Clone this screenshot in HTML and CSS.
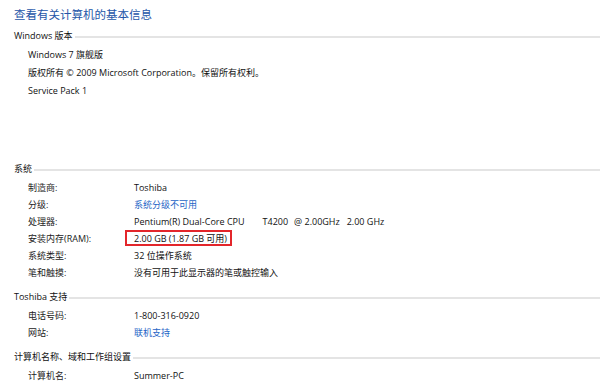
FILE: index.html
```html
<!DOCTYPE html>
<html lang="zh-CN">
<head>
  <meta charset="UTF-8" />
  <title>系统</title>
  <link rel="stylesheet" href="styles.css">
</head>
<body>

  <h1 class="title">查看有关计算机的基本信息</h1>

  <div class="section first">
    <div class="head"><span>Windows 版本</span><i></i></div>
    <div class="row"><span class="val">Windows 7 旗舰版</span></div>
    <div class="row"><span class="val">版权所有 © 2009 Microsoft Corporation。保留所有权利。</span></div>
    <div class="row"><span class="val">Service Pack 1</span></div>
  </div>

  <div class="section gap">
    <div class="head"><span>系统</span><i></i></div>
    <div class="row"><span class="label">制造商:</span><span>Toshiba</span></div>
    <div class="row"><span class="label">分级:</span><a href="#">系统分级不可用</a></div>
    <div class="row"><span class="label">处理器:</span><span>Pentium(R) Dual-Core CPU</span><span class="sp1">T4200</span><span class="sp2">@ 2.00GHz</span><span class="sp3">2.00 GHz</span></div>
    <div class="row"><span class="label">安装内存(RAM):</span><span class="hl">2.00 GB (1.87 GB 可用)</span></div>
    <div class="row"><span class="label">系统类型:</span><span>32 位操作系统</span></div>
    <div class="row"><span class="label">笔和触摸:</span><span>没有可用于此显示器的笔或触控输入</span></div>
  </div>

  <div class="section">
    <div class="head"><span>Toshiba 支持</span><i></i></div>
    <div class="row"><span class="label">电话号码:</span><span>1-800-316-0920</span></div>
    <div class="row"><span class="label">网站:</span><a href="#">联机支持</a></div>
  </div>

  <div class="section">
    <div class="head"><span>计算机名称、域和工作组设置</span><i></i></div>
    <div class="row"><span class="label">计算机名:</span><span>Summer-PC</span></div>
  </div>

</body>
</html>
```

FILE: styles.css
```css
* {
  margin: 0;
  padding: 0;
  box-sizing: border-box;
}
html, body {
  height: 100%;
  overflow: hidden;
  background: #fff;
}
body {
  padding: 0 0 0 14px;
  font-family: "Open Sans", "Noto Sans CJK SC", sans-serif;
  font-size: 9px;
  color: #111;
}
.title {
  height: 28px;
  line-height: 28px;
  font-size: 11.5px;
  font-weight: normal;
  color: #2456a8;
  font-family: "Noto Sans CJK SC", sans-serif;
}
.section {
  margin-top: 8px;
}
.section.first {
  margin-top: 0;
}
.section.gap {
  margin-top: 62px;
}
.head {
  display: flex;
  align-items: center;
  height: 14px;
  margin-bottom: 4px;
}
.head span {
  white-space: nowrap;
}
.head i {
  flex: 1;
  height: 2px;
  margin: 3px 0 0 2px;
  background: #e4e4e4;
}
.row {
  display: flex;
  align-items: center;
  height: 17px;
  padding-left: 14px;
  white-space: nowrap;
}
.first .head {
  margin-bottom: 3px;
}
.first .row {
  height: 18px;
}
.label {
  width: 106px;
  color: #222;
}
a {
  color: #1d64c6;
  text-decoration: none;
}
.sp1 { margin-left: 18px; }
.sp2 { margin-left: 6px; }
.sp3 { margin-left: 7px; }
.hl {
  position: relative;
}
.hl::after {
  content: "";
  position: absolute;
  left: -9px;
  right: -5px;
  top: -2px;
  bottom: -1px;
  border: 2px solid #e3262b;
}
```
